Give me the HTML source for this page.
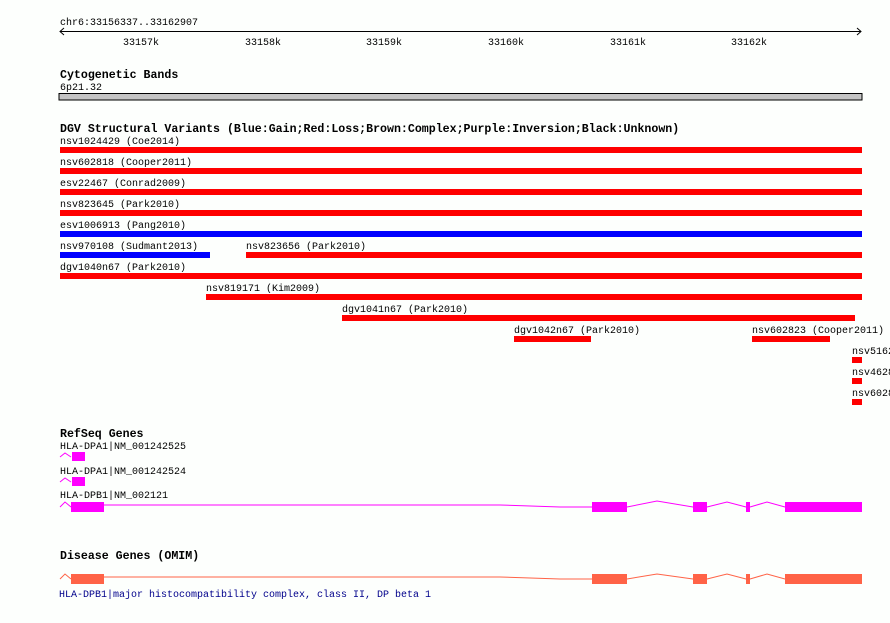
<!DOCTYPE html>
<html><head><meta charset="utf-8"><style>
html,body{margin:0;padding:0;background:#fff;}
svg{display:block;}
text{font-family:"Liberation Mono",monospace;font-size:10px;fill:#000;}
.b{font-weight:bold;font-size:11.6px;}
</style></head><body>
<svg width="890" height="623" xmlns="http://www.w3.org/2000/svg">
<rect width="890" height="623" fill="#fdfffd"/>
<g id="grid" stroke-width="1"></g>
<script>
var g=document.getElementById('grid'),s='';
for(var i=0;i<66;i++){var x=68.8+i*12.156;if(x>862)break;var maj=(i%10==6);
s+='<line x1="'+x.toFixed(1)+'" y1="0" x2="'+x.toFixed(1)+'" y2="623" stroke="'+(maj?'#87cbe8':'#aee8ee')+'"/>';}
s+='<line x1="60.5" y1="0" x2="60.5" y2="623" stroke="#aee8ee"/>';
g.innerHTML=s;
var t='';for(var i=0;i<66;i++){var x=68.8+i*12.156;if(x>858)break;t+='<line x1="'+x.toFixed(1)+'" y1="28" x2="'+x.toFixed(1)+'" y2="34" stroke="#000"/>';}
document.write('');
window.__ticks=t;
</script>
<g id="ticks"></g>
<script>document.getElementById('ticks').innerHTML=window.__ticks;</script>
<text x="60" y="25">chr6:33156337..33162907</text>
<line x1="60" y1="31.5" x2="861" y2="31.5" stroke="#000"/>
<polyline points="64,28 60,31.5 64,35" fill="none" stroke="#000"/>
<polyline points="857,28 861,31.5 857,35" fill="none" stroke="#000"/>
<text x="123" y="45">33157k</text><text x="245" y="45">33158k</text><text x="366" y="45">33159k</text>
<text x="488" y="45">33160k</text><text x="610" y="45">33161k</text><text x="731" y="45">33162k</text>

<text class="b" x="60" y="78">Cytogenetic Bands</text>
<text x="60" y="90">6p21.32</text>
<rect x="59" y="93.5" width="803" height="6.5" fill="#c4c4c4" stroke="#000"/>

<text class="b" x="60" y="132">DGV Structural Variants (Blue:Gain;Red:Loss;Brown:Complex;Purple:Inversion;Black:Unknown)</text>
<g fill="#f00">
<rect x="60" y="147" width="802" height="6"/><rect x="60" y="168" width="802" height="6"/>
<rect x="60" y="189" width="802" height="6"/><rect x="60" y="210" width="802" height="6"/>
<rect x="60" y="231" width="802" height="6" fill="#00f"/>
<rect x="60" y="252" width="150" height="6" fill="#00f"/><rect x="246" y="252" width="616" height="6"/>
<rect x="60" y="273" width="802" height="6"/><rect x="206" y="294" width="656" height="6"/>
<rect x="342" y="315" width="513" height="6"/>
<rect x="514" y="336" width="77" height="6"/><rect x="752" y="336" width="78" height="6"/>
<rect x="852" y="357" width="10" height="6"/><rect x="852" y="378" width="10" height="6"/><rect x="852" y="399" width="10" height="6"/>
</g>
<text x="60" y="144">nsv1024429 (Coe2014)</text>
<text x="60" y="165">nsv602818 (Cooper2011)</text>
<text x="60" y="186">esv22467 (Conrad2009)</text>
<text x="60" y="207">nsv823645 (Park2010)</text>
<text x="60" y="228">esv1006913 (Pang2010)</text>
<text x="60" y="249">nsv970108 (Sudmant2013)</text>
<text x="246" y="249">nsv823656 (Park2010)</text>
<text x="60" y="270">dgv1040n67 (Park2010)</text>
<text x="206" y="291">nsv819171 (Kim2009)</text>
<text x="342" y="312">dgv1041n67 (Park2010)</text>
<text x="514" y="333">dgv1042n67 (Park2010)</text>
<text x="752" y="333">nsv602823 (Cooper2011)</text>
<text x="852" y="354">nsv5162</text><text x="852" y="375">nsv4628</text><text x="852" y="396">nsv6028</text>

<text class="b" x="60" y="437">RefSeq Genes</text>
<text x="60" y="449">HLA-DPA1|NM_001242525</text>
<polyline points="60,457 65,453 71,457" fill="none" stroke="#f0f"/>
<rect x="72" y="452" width="13" height="9" fill="#f0f"/>
<text x="60" y="474">HLA-DPA1|NM_001242524</text>
<polyline points="60,482 65,478 71,482" fill="none" stroke="#f0f"/>
<rect x="72" y="477" width="13" height="9" fill="#f0f"/>
<text x="60" y="498">HLA-DPB1|NM_002121</text>
<g stroke="#f0f" fill="none">
<polyline points="60,507 65,502 71,507"/>
<polyline points="103,505 500,505 560,507 592,507"/>
<polyline points="627,507 657,501 693,507"/>
<polyline points="707,507 727,502 746,507"/>
<polyline points="750,507 767,502 785,507"/>
</g>
<g fill="#f0f">
<rect x="71" y="502" width="33" height="10"/><rect x="592" y="502" width="35" height="10"/>
<rect x="693" y="502" width="14" height="10"/><rect x="746" y="502" width="4" height="10"/>
<rect x="785" y="502" width="77" height="10"/>
</g>

<text class="b" x="60" y="559">Disease Genes (OMIM)</text>
<g stroke="#ff6347" fill="none">
<polyline points="60,579 65,574 71,579"/>
<polyline points="103,577 500,577 560,579 592,579"/>
<polyline points="627,579 657,574 693,579"/>
<polyline points="707,579 727,574 746,579"/>
<polyline points="750,579 767,574 785,579"/>
</g>
<g fill="#ff6347">
<rect x="71" y="574" width="33" height="10"/><rect x="592" y="574" width="35" height="10"/>
<rect x="693" y="574" width="14" height="10"/><rect x="746" y="574" width="4" height="10"/>
<rect x="785" y="574" width="77" height="10"/>
</g>
<text x="59" y="597" style="fill:#00008b">HLA-DPB1|major histocompatibility complex, class II, DP beta 1</text>
</svg>
</body></html>
